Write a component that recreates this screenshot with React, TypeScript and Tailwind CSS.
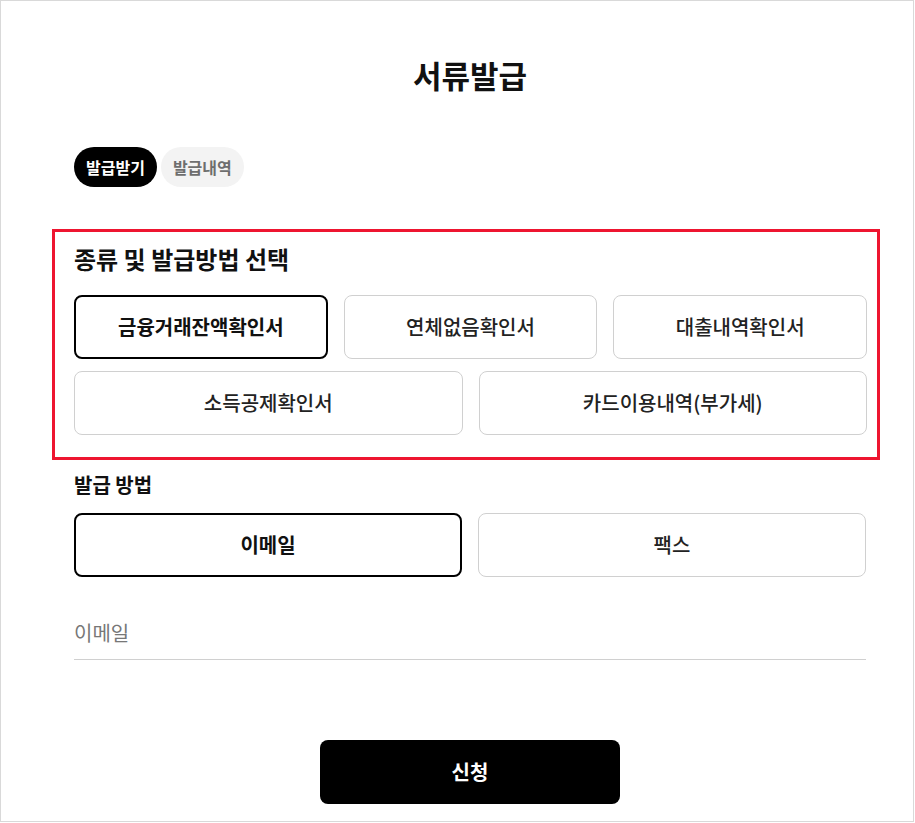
import React, { useState } from 'react';

const DOC_TYPES = ['금융거래잔액확인서', '연체없음확인서', '대출내역확인서', '소득공제확인서', '카드이용내역(부가세)'];

const OptionButton: React.FC<{ label: string; selected: boolean; onClick: () => void }> = ({ label, selected, onClick }) => (
    <button
        type="button"
        onClick={onClick}
        className={
            selected
                ? 'h-[64px] rounded-lg border-2 border-black bg-white text-[20px] font-bold text-[#111]'
                : 'h-[64px] rounded-lg border border-[#d0d0d0] bg-white text-[20px] font-medium text-[#222]'
        }
    >
        {label}
    </button>
);

const App: React.FC = () => {
    const [tab, setTab] = useState(0);
    const [docType, setDocType] = useState(0);
    const [method, setMethod] = useState(0);
    const [email, setEmail] = useState('');

    return (
        <div
            className="w-[914px] h-[822px] border border-[#d9d9d9] bg-white text-[#111]"
            style={{ fontFamily: '"Noto Sans CJK KR", "Noto Sans", sans-serif' }}
        >
            <div className="ml-[73px] w-[792px]">
                <h1 className="pt-[56px] text-center text-[31px] leading-[36px] font-bold">서류발급</h1>

                {/* tabs */}
                <div className="mt-[54px] flex gap-1">
                    {['발급받기', '발급내역'].map((t, i) => (
                        <button
                            key={t}
                            type="button"
                            onClick={() => setTab(i)}
                            className={
                                tab === i
                                    ? 'h-[40px] rounded-full bg-black px-[12px] text-[16px] font-bold text-white'
                                    : 'h-[40px] rounded-full bg-[#f3f3f3] px-[12px] text-[16px] font-bold text-[#6e6e6e]'
                            }
                        >
                            {t}
                        </button>
                    ))}
                </div>

                {/* document type */}
                <section className="mt-[42px] -ml-[22px] w-[828px] border-[3px] border-[#ee1530] pt-[11px] pb-[22px] pl-[19px] pr-[10px]">
                    <h2 className="text-[24px] leading-[32px] font-bold">종류 및 발급방법 선택</h2>
                    <div className="mt-[20px] grid grid-cols-3 gap-x-4">
                        {DOC_TYPES.slice(0, 3).map((d, i) => (
                            <OptionButton key={d} label={d} selected={docType === i} onClick={() => setDocType(i)} />
                        ))}
                    </div>
                    <div className="mt-[12px] grid grid-cols-2 gap-x-4">
                        {DOC_TYPES.slice(3).map((d, i) => (
                            <OptionButton key={d} label={d} selected={docType === i + 3} onClick={() => setDocType(i + 3)} />
                        ))}
                    </div>
                </section>

                {/* method */}
                <h3 className="mt-[11px] text-[20px] leading-[28px] font-bold">발급 방법</h3>
                <div className="mt-[14px] grid grid-cols-2 gap-x-4">
                    {['이메일', '팩스'].map((m, i) => (
                        <OptionButton key={m} label={m} selected={method === i} onClick={() => setMethod(i)} />
                    ))}
                </div>

                <input
                    type="text"
                    value={email}
                    onChange={(e) => setEmail(e.target.value)}
                    placeholder={method === 0 ? '이메일' : '팩스번호'}
                    className="mt-[29px] block h-[54px] w-full border-b border-[#d0d0d0] bg-transparent text-[20px] outline-none placeholder:text-[#777]"
                />

                <div className="mt-[80px] flex justify-center">
                    <button type="button" className="h-[64px] w-[300px] rounded-lg bg-black text-[20px] font-bold text-white">
                        신청
                    </button>
                </div>
            </div>
        </div>
    );
};

export default App;
